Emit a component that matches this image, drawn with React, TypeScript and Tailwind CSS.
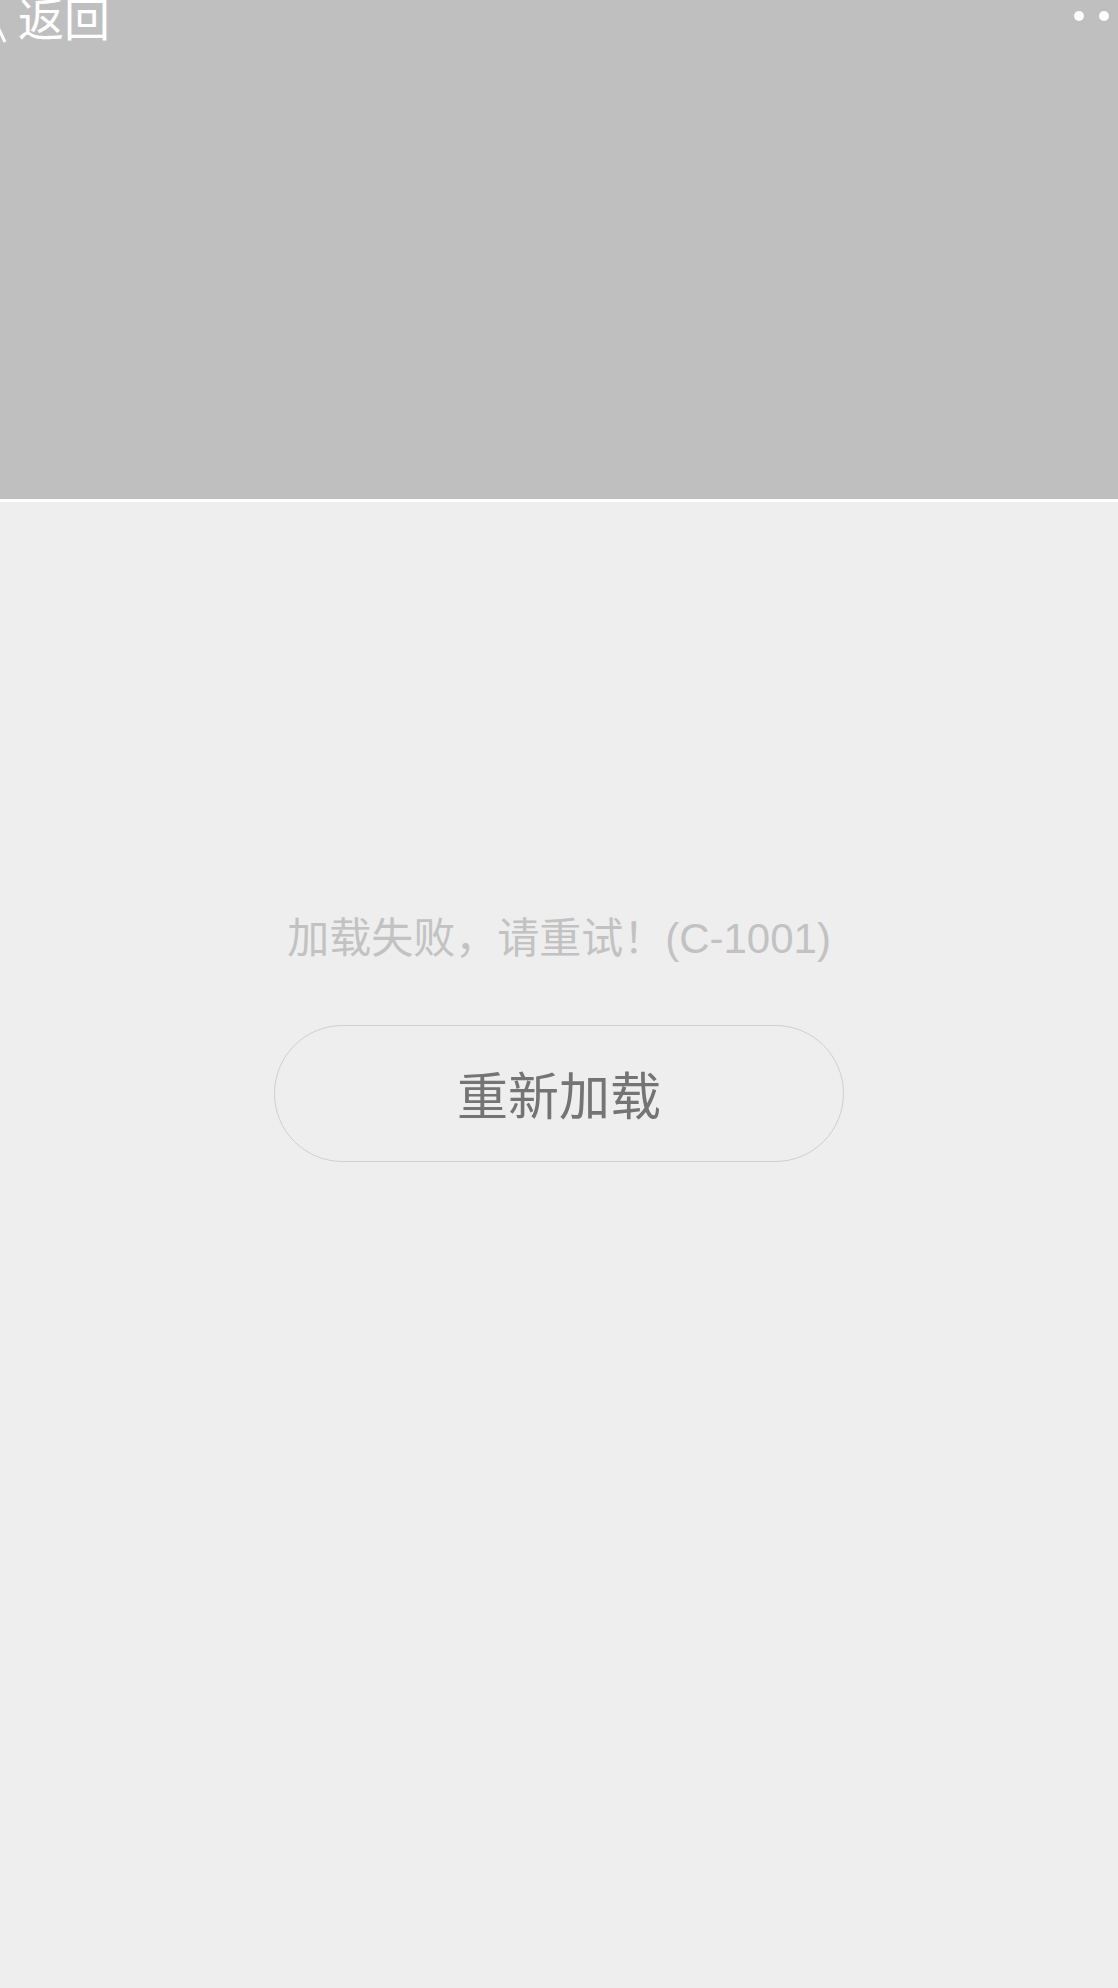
const cjk = { fontFamily: '"Noto Sans CJK SC", "Noto Sans", sans-serif' }
const latin = { fontFamily: '"Liberation Sans", Arial, sans-serif' }

export default function App() {
  return (
    <div className="flex min-h-[1988px] w-full flex-col bg-[#eeeeee]" style={cjk}>
      {/* 顶部导航（灰色占位） */}
      <header className="h-[502px] w-full border-b-[3px] border-white bg-[#bfbfbf]">
        <div className="flex items-start justify-between">
          <div className="-mt-[7px] flex items-start text-white">
            <svg width="8" height="52" viewBox="0 0 8 52" className="overflow-visible">
              <path d="M-4 30 L5 49" fill="none" stroke="white" strokeWidth="3" />
            </svg>
            <span className="ml-[10px] text-[46px] leading-none">返回</span>
          </div>
          <div className="mr-[9px] mt-[11px] flex gap-[15px]">
            <span className="h-[10px] w-[10px] rounded-full bg-white" />
            <span className="h-[10px] w-[10px] rounded-full bg-white" />
          </div>
        </div>
      </header>

      <main className="flex flex-col items-center">
        <p className="mt-[412px] h-[42px] text-[42px] leading-none text-[#c2c2c2]">
          加载失败，请重试！<span style={latin}>(C-1001)</span>
        </p>
        <button
          type="button"
          className="mt-[69px] flex h-[137px] w-[570px] items-center justify-center rounded-full border border-[#cfcfcf] text-[51px] text-[#747474]"
          style={cjk}
        >
          重新加载
        </button>
      </main>
    </div>
  )
}
